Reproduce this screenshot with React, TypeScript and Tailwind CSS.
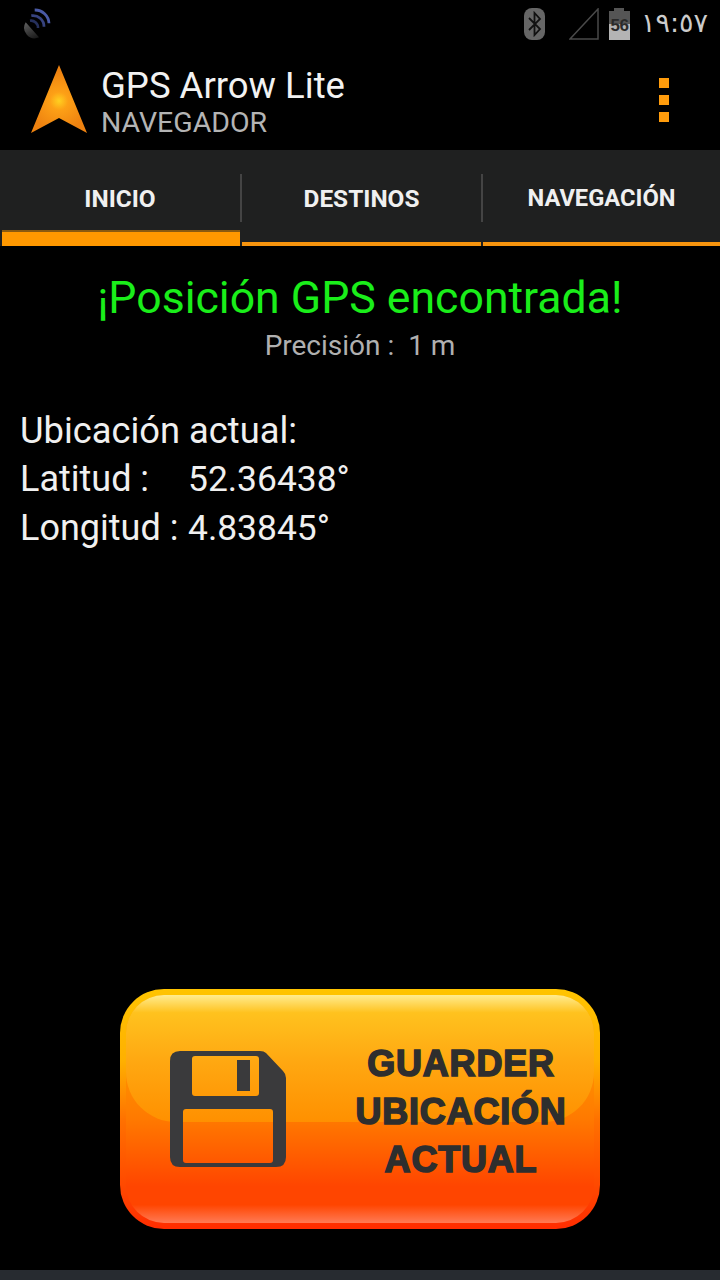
const tabs = [
  { label: 'INICIO', width: 'w-[242px]', size: 'text-[24.4px]', bar: 'ml-[2px] mr-[2px] h-[16px] border-t-[2px] border-[#8a5a10] bg-[#ff9800]', divider: true },
  { label: 'DESTINOS', width: 'w-[241px]', size: 'text-[24.4px]', bar: 'mr-[2px] h-[4px] bg-[#f7940e]', divider: true },
  { label: 'NAVEGACIÓN', width: 'w-[237px]', size: 'text-[23.7px]', bar: 'h-[4px] bg-[#f7940e]', divider: false },
];

function ArrowLogo() {
  return (
    <svg width="58" height="70" viewBox="0 0 58 70" className="shrink-0">
      <defs>
        <radialGradient id="arrowFill" cx="28" cy="36" r="30" gradientUnits="userSpaceOnUse">
          <stop offset="0" stopColor="#ffd020" />
          <stop offset="0.3" stopColor="#fda016" />
          <stop offset="1" stopColor="#ee8210" />
        </radialGradient>
      </defs>
      <path d="M28 0 L56 68 L28 53 L0 68 Z" fill="url(#arrowFill)" />
    </svg>
  );
}

function SatelliteIcon() {
  return (
    <svg width="32" height="32" viewBox="0 0 32 32">
      <defs>
        <linearGradient id="dishFill" x1="0.2" y1="0" x2="0.7" y2="1">
          <stop offset="0" stopColor="#5c5c5c" />
          <stop offset="1" stopColor="#1c1c1c" />
        </linearGradient>
      </defs>
      <path d="M6.7 14.3 A10.5 10.5 0 0 0 20 29.3 Z" fill="url(#dishFill)" />
      <path d="M11 12.7 A7 7 0 0 1 19 20" fill="none" stroke="#26305c" strokeWidth="2.6" />
      <path d="M12.3 7.7 A11 11 0 0 1 25 18.7" fill="none" stroke="#37437f" strokeWidth="2.8" />
      <path d="M15.7 2 A14 14 0 0 1 30 15.3" fill="none" stroke="#4a5aa6" strokeWidth="2.8" />
    </svg>
  );
}

function BluetoothIcon() {
  return (
    <div className="flex h-[32px] w-[21px] items-center justify-center rounded-[8px] bg-[#666666]">
      <svg width="15" height="26" viewBox="0 0 15 26">
        <path d="M2 7 L13 18 L7.5 24 V2 L13 8 L2 19" fill="none" stroke="#111111" strokeWidth="1.8" />
      </svg>
    </div>
  );
}

function SignalIcon() {
  return (
    <svg width="30" height="32" viewBox="0 0 30 32">
      <path d="M1 31 L29 1 V31 Z" fill="none" stroke="#4a4a4a" strokeWidth="1.5" />
    </svg>
  );
}

function BatteryIcon() {
  return (
    <div className="flex w-[21px] flex-col items-center">
      <div className="h-[3px] w-[10px] bg-[#555555]" />
      <div className="relative h-[29px] w-full bg-[linear-gradient(to_bottom,#555555_0,#555555_45%,#b4b4b4_45%,#b4b4b4_100%)]">
        <span className="absolute inset-x-0 top-[6px] text-center font-['Liberation_Sans',sans-serif] text-[17px] font-bold leading-[17px] tracking-[-0.5px] text-[#2a2a2a]">
          56
        </span>
      </div>
    </div>
  );
}

function FloppyIcon() {
  return (
    <svg width="116" height="116" viewBox="0 0 116 116" className="shrink-0">
      <path
        fillRule="evenodd"
        fill="#3a3a3c"
        d="M10 0 H90 Q94 0 96 2 L113 20 Q116 23 116 27 V106 Q116 116 106 116 H10 Q0 116 0 106 V10 Q0 0 10 0 Z
           M25 5 Q22 5 22 8 V42 Q22 45 25 45 H86 Q89 45 89 42 V8 Q89 5 86 5 Z
           M16 58 Q13 58 13 61 V109 Q13 112 16 112 H100 Q103 112 103 109 V61 Q103 58 100 58 Z"
      />
      <rect x="67" y="9" width="13" height="31" fill="#3a3a3c" />
    </svg>
  );
}

export default function App() {
  return (
    <div className="flex h-[1280px] w-[720px] flex-col overflow-hidden bg-black font-['Roboto',sans-serif]">
      {/* status bar */}
      <div className="flex h-[50px] shrink-0 items-center pb-[2px] pl-[19px] pr-[12px]">
        <SatelliteIcon />
        <div className="ml-auto flex items-center">
          <BluetoothIcon />
          <div className="ml-[24px]">
            <SignalIcon />
          </div>
          <div className="ml-[10px]">
            <BatteryIcon />
          </div>
          <span className="mb-[3px] ml-[11px] font-['DejaVu_Sans',sans-serif] text-[27px] leading-[32px] tracking-[-0.5px] text-[#cccccc]">
            ١٩:٥٧
          </span>
        </div>
      </div>

      {/* action bar */}
      <div className="flex h-[100px] shrink-0 items-center pl-[31px] pr-[51px]">
        <ArrowLogo />
        <div className="ml-[12px] flex flex-col pt-[8px]">
          <span className="text-[36.5px] leading-[38px] text-[#f2f2f2]">GPS Arrow Lite</span>
          <span className="text-[28.5px] leading-[36px] text-[#b4b4b4]">NAVEGADOR</span>
        </div>
        <div className="ml-auto flex flex-col gap-[7px]">
          <div className="h-[10px] w-[10px] bg-[#ff9c0c]" />
          <div className="h-[10px] w-[10px] bg-[#ff9c0c]" />
          <div className="h-[10px] w-[10px] bg-[#ff9c0c]" />
        </div>
      </div>

      {/* tabs */}
      <div className="flex h-[96px] shrink-0 bg-[#1f2020]">
        {tabs.map((tab) => (
          <div key={tab.label} className={`flex flex-col ${tab.width}`}>
            <div className="mt-[24px] flex h-[48px]">
              <div className={`flex flex-1 items-center justify-center pt-[2px] font-bold text-[#f0f0f0] ${tab.size}`}>
                {tab.label}
              </div>
              {tab.divider && <div className="w-[2px] bg-[#444444]" />}
            </div>
            <div className="flex-1" />
            <div className={tab.bar} />
          </div>
        ))}
      </div>

      {/* content */}
      <div className="flex flex-1 flex-col">
        <div className="mt-[26px] text-center text-[44.6px] leading-[52px] text-[#1aee1a]">
          ¡Posición GPS encontrada!
        </div>
        <div className="mt-[6px] whitespace-pre text-center text-[28px] leading-[32px] text-[#b0b0b0]">
          Precisión :  1 m
        </div>

        <div className="ml-[20px] mt-[44px] text-[36px] leading-[49px] text-[#f0f0f0]">
          <div className="text-[36.3px]">Ubicación actual:</div>
          <div className="flex">
            <span className="w-[168px]">Latitud :</span>
            <span className="text-[35.4px]">52.36438°</span>
          </div>
          <div className="flex">
            <span className="w-[168px]">Longitud :</span>
            <span className="text-[35.4px]">4.83845°</span>
          </div>
        </div>

        {/* save button */}
        <div className="mx-auto mb-[41px] mt-auto h-[240px] w-[480px] rounded-[44px] bg-[linear-gradient(to_bottom,#ffc400_0%,#ffb000_30%,#ff7000_55%,#ff4400_85%,#ff2c00_100%)] p-[6px]">
          <div className="relative flex h-full items-center rounded-[38px] bg-[linear-gradient(to_bottom,#ffb000_0%,#ff7a00_54%,#ff4500_84%,#ff4500_92%,#ff7a55_100%)] pl-[44px]">
            <div className="absolute inset-x-0 top-0 h-[127px] rounded-b-[50px] rounded-t-[38px] bg-[linear-gradient(to_bottom,#ffec90_0%,#ffc21e_14%,#ffa912_50%,#ff9000_100%)]" />
            <div className="relative">
              <FloppyIcon />
            </div>
            <div className="relative ml-[42px] flex-1 pt-[6px] text-center font-['Liberation_Sans',sans-serif] text-[36px] font-bold leading-[48px] tracking-[0.8px] text-[#2e2e2e] [-webkit-text-stroke:1.6px_#2e2e2e]">
              <div>GUARDER</div>
              <div>UBICACIÓN</div>
              <div>ACTUAL</div>
            </div>
          </div>
        </div>
      </div>

      {/* nav strip */}
      <div className="h-[10px] shrink-0 bg-[#272b30]" />
    </div>
  );
}
